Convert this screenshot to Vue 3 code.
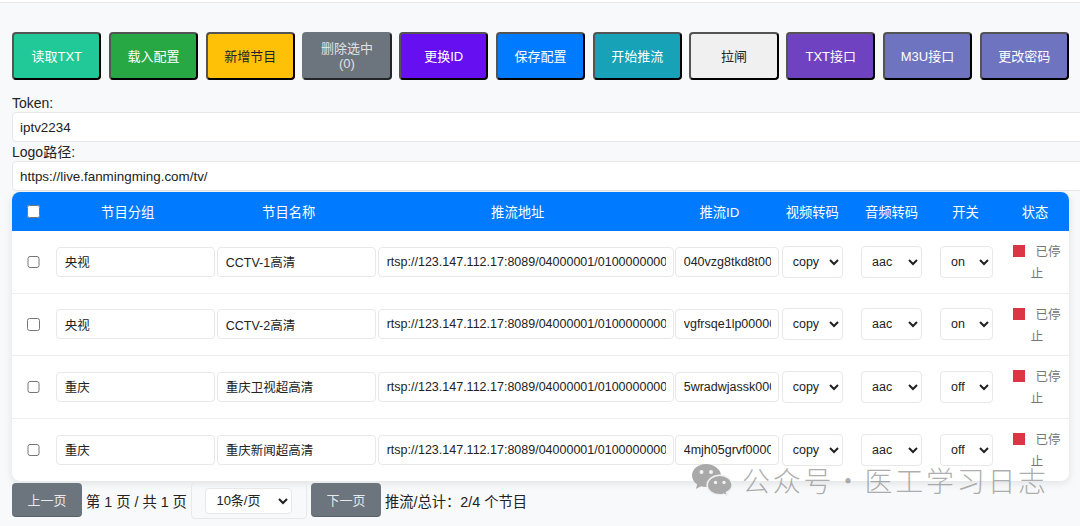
<script setup>
const actions = [
  { label: "读取TXT", cls: "teal" },
  { label: "载入配置", cls: "green" },
  { label: "新增节目", cls: "yellow" },
  { label: "删除选中 (0)", cls: "gray" },
  { label: "更换ID", cls: "violet" },
  { label: "保存配置", cls: "blue" },
  { label: "开始推流", cls: "cyan" },
  { label: "拉闸", cls: "light" },
  { label: "TXT接口", cls: "purple" },
  { label: "M3U接口", cls: "indigo" },
  { label: "更改密码", cls: "indigo" }
]

const heads = ["节目分组", "节目名称", "推流地址", "推流ID", "视频转码", "音频转码", "开关", "状态"]

const base = "rtsp://123.147.112.17:8089/04000001/01000000004000000000000000000"

const rows = [
  { group: "央视", name: "CCTV-1高清", url: base + "231", id: "040vzg8tkd8t0000000", power: "on" },
  { group: "央视", name: "CCTV-2高清", url: base + "232", id: "vgfrsqe1lp000000000", power: "on" },
  { group: "重庆", name: "重庆卫视超高清", url: base + "233", id: "5wradwjassk00000000", power: "off" },
  { group: "重庆", name: "重庆新闻超高清", url: base + "234", id: "4mjh05grvf000000000", power: "off" }
]
</script>

<template>
  <div class="page">
    <div class="toolbar">
      <button
        v-for="item in actions"
        :key="item.label"
        class="action"
        :class="item.cls"
      >
        {{ item.label }}
      </button>
    </div>

    <label class="field-label">Token:</label>
    <input class="field" value="iptv2234">
    <label class="field-label">Logo路径:</label>
    <input class="field" value="https://live.fanmingming.com/tv/">

    <div class="table">
      <div class="row head">
        <div class="check-cell"><input type="checkbox"></div>
        <div
          v-for="title in heads"
          :key="title"
          class="head-cell"
        >
          {{ title }}
        </div>
      </div>

      <div
        v-for="row in rows"
        :key="row.id"
        class="row body-row"
      >
        <div class="check-cell"><input type="checkbox"></div>
        <div class="cell"><input class="cell-input" :value="row.group"></div>
        <div class="cell"><input class="cell-input" :value="row.name"></div>
        <div class="cell"><input class="cell-input" :value="row.url"></div>
        <div class="cell"><input class="cell-input" :value="row.id"></div>
        <div class="cell">
          <select class="cell-select video"><option>copy</option><option>h264</option></select>
        </div>
        <div class="cell">
          <select class="cell-select audio"><option>aac</option><option>copy</option></select>
        </div>
        <div class="cell">
          <select class="cell-select power" :value="row.power"><option>on</option><option>off</option></select>
        </div>
        <div class="status"><span class="dot"></span>已停止</div>
      </div>
    </div>

    <div class="pager">
      <button class="page-btn">上一页</button>
      <span>第 1 页 / 共 1 页</span>
      <div class="size-box">
        <select class="size-select"><option>10条/页</option><option>20条/页</option></select>
      </div>
      <button class="page-btn">下一页</button>
      <span>推流/总计：2/4 个节目</span>
    </div>

    <div class="watermark">
      <svg class="wechat" viewBox="0 0 40 32" width="40" height="32">
        <path fill="#a9a9a9" d="M14 0C6.300 0 0 5.100 0 11.500c0 3.600 2 6.800 5.200 8.900L3.800 25l5.300-2.800c1.600.4 3.200.7 4.900.7 8 0 15-5.200 15-11.400S21.700 0 14 0z" />
        <path fill="#a9a9a9" stroke="#f0f1f2" stroke-width="1.600" d="M27.800 11.200c-6.800 0-12.600 4.500-12.600 10s5.800 9.600 12.600 9.600c1.300 0 2.700-.2 3.900-.6l3.900 1.800-1-3.500c3.300-1.800 5.600-4.600 5.600-7.300 0-5.500-5.600-10-12.400-10z" />
        <circle cx="9.500" cy="8" r="2" fill="#f0f1f2" />
        <circle cx="19" cy="8" r="2" fill="#f0f1f2" />
        <circle cx="23.500" cy="18.500" r="1.700" fill="#f0f1f2" />
        <circle cx="32" cy="18.500" r="1.700" fill="#f0f1f2" />
      </svg>
      <span class="wm-text">公众号 · 医工学习日志</span>
    </div>
  </div>
</template>

<style scoped>
.page {
  position: relative;
  box-sizing: border-box;
  height: 526px;
  overflow: hidden;
  margin-top: 2px;
  padding: 29px 11px 0 12px;
  background: #f8f9fa;
  border-top: 1px solid #e8e8e8;
  color: #222;
  font-family: "Liberation Sans", "Noto Sans CJK SC", sans-serif;
  font-size: 14px;
}

.toolbar {
  display: flex;
  gap: 7.3px;
  margin-bottom: 13px;
}

.action {
  box-sizing: border-box;
  width: 89.6px;
  height: 48px;
  padding: 0 14px;
  border: 2px outset #000;
  border-radius: 4px;
  color: #fff;
  font-family: inherit;
  font-size: 13px;
  line-height: 15px;
}

.teal { background: #20c997; }
.green { background: #28a745; }
.yellow { background: #ffc107; color: #212529; }
.gray { background: #6c757d; border-color: #6c757d; color: rgba(255,255,255,0.8); }
.violet { background: #6610f2; }
.blue { background: #007bff; }
.cyan { background: #17a2b8; }
.light { background: #f0f0f0; color: #212529; }
.purple { background: #6f42c1; }
.indigo { background: #6f74c0; }

.field-label {
  display: block;
  line-height: 21px;
  height: 19px;
}

.field {
  display: block;
  box-sizing: content-box;
  width: 100%;
  height: 28px;
  padding: 0 7px;
  border: 1px solid #e8e8e8;
  border-radius: 4px;
  background: #fff;
  color: #222;
  font-family: inherit;
  font-size: 13.400px;
}

.table {
  margin-top: 0.5px;
  background: #fff;
  border-radius: 8px;
  box-shadow: 0 2px 8px rgba(0,0,0,0.1);
  overflow: hidden;
}

.row {
  display: grid;
  grid-template-columns: 44.2px 161px 161px 297px 106.5px 79.3px 79px 69px 60px;
  align-items: center;
}

.head {
  height: 39.500px;
  background: #007bff;
  color: #fff;
  font-size: 13.300px;
}

.head-cell {
  padding-right: 18px;
  text-align: center;
}

.head-cell:last-child {
  padding-right: 8px;
}

.check-cell {
  display: flex;
  justify-content: center;
}

.check-cell input {
  margin: 0 1px 0 0;
  width: 12.500px;
  height: 12.500px;
}

.body-row {
  height: 62.500px;
  border-bottom: 1px solid #eee;
  box-sizing: border-box;
}

.body-row:last-child {
  border-bottom: 0;
}

.cell {
  display: flex;
}

.cell-input {
  box-sizing: border-box;
  width: 159px;
  height: 30px;
  padding: 0 7.5px;
  border: 1px solid #e8e8e8;
  border-radius: 4px;
  color: #222;
  font-family: inherit;
  font-size: 12.500px;
}

.cell:nth-child(4) .cell-input {
  width: 296px;
}

.cell:nth-child(5) .cell-input {
  width: 104px;
}

.cell-select {
  box-sizing: border-box;
  height: 32px;
  padding: 0 4px 0 6px;
  border: 1px solid #e8e8e8;
  border-radius: 4px;
  background: #fff;
  color: #222;
  font-family: inherit;
  font-size: 12.500px;
}

.video,
.audio {
  width: 61px;
}

.power {
  width: 53px;
}

.status {
  padding: 3px 4px 0 0;
  color: #777;
  font-size: 12.500px;
  line-height: 22px;
  text-align: center;
}

.dot {
  display: inline-block;
  width: 12px;
  height: 12px;
  margin-right: 10px;
  vertical-align: -1px;
  background: #dc3545;
}

.pager {
  display: flex;
  align-items: center;
  gap: 4px;
  margin-top: 0.5px;
  font-size: 14.300px;
}

.page-btn {
  width: 70px;
  height: 34px;
  border: 0;
  border-bottom: 1px solid #5a6268;
  border-radius: 4px;
  background: #6c757d;
  color: rgba(255,255,255,0.85);
  font-family: inherit;
  font-size: 13px;
}

.size-box {
  box-sizing: border-box;
  display: flex;
  justify-content: center;
  width: 116px;
  height: 37px;
  padding-top: 5px;
  border: 1px solid #e8e8e8;
  border-radius: 4px;
}

.size-select {
  box-sizing: border-box;
  width: 87px;
  height: 26px;
  padding: 0 4px 0 6px;
  border: 1px solid #e8e8e8;
  border-radius: 4px;
  background: #fff;
  color: #222;
  font-family: inherit;
  font-size: 13px;
}

.watermark {
  position: absolute;
  left: 692px;
  top: 461px;
  display: flex;
  align-items: center;
  gap: 10px;
  pointer-events: none;
}

.wm-text {
  color: rgba(120,120,120,0.6);
  font-family: "Noto Sans CJK SC", sans-serif;
  font-size: 28px;
  font-weight: 300;
  letter-spacing: 2.700px;
  word-spacing: -9px;
  line-height: 32px;
  white-space: nowrap;
}
</style>

<style>
html,
body {
  margin: 0;
  overflow: hidden;
  background: #fff;
}
</style>
